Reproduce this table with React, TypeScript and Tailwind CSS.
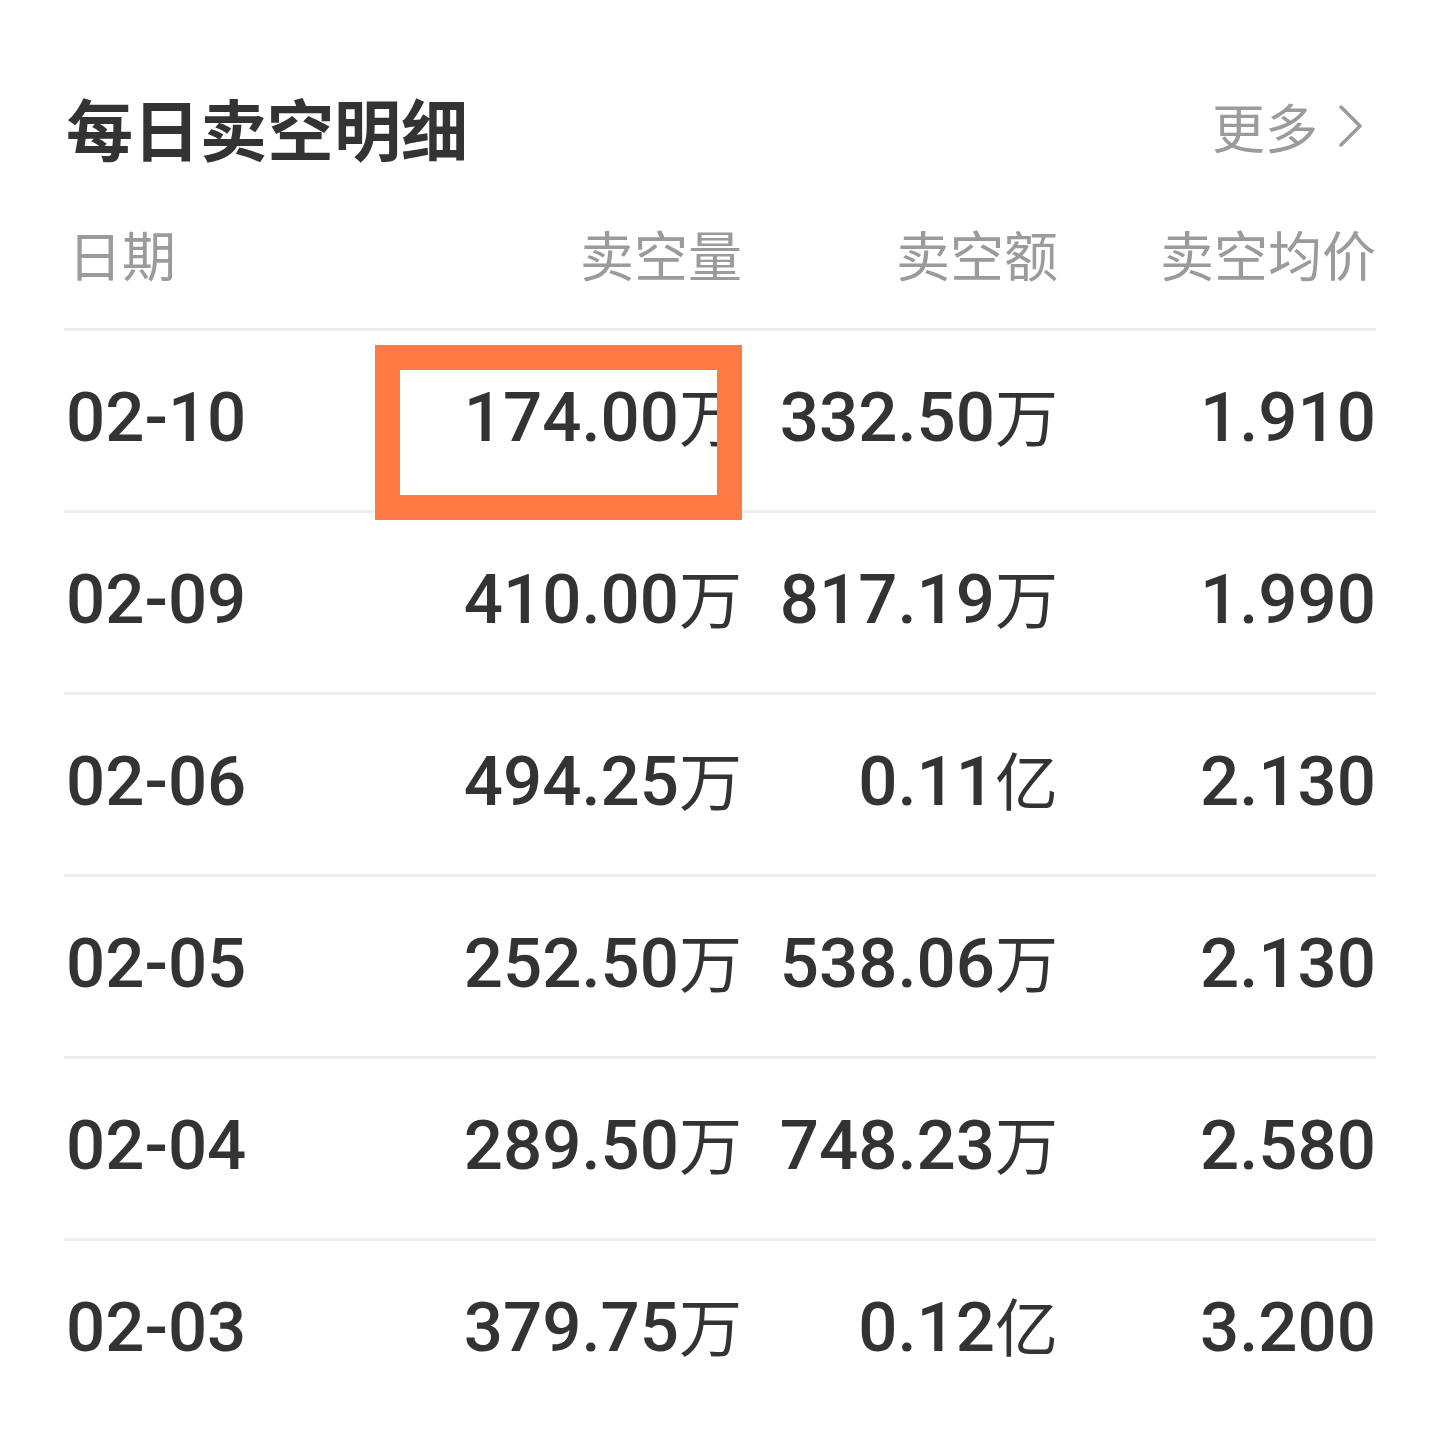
const rows = [
  { date: '02-10', vol: '174.00', volUnit: '万', amt: '332.50', amtUnit: '万', avg: '1.910', marked: true },
  { date: '02-09', vol: '410.00', volUnit: '万', amt: '817.19', amtUnit: '万', avg: '1.990' },
  { date: '02-06', vol: '494.25', volUnit: '万', amt: '0.11', amtUnit: '亿', avg: '2.130' },
  { date: '02-05', vol: '252.50', volUnit: '万', amt: '538.06', amtUnit: '万', avg: '2.130' },
  { date: '02-04', vol: '289.50', volUnit: '万', amt: '748.23', amtUnit: '万', avg: '2.580' },
  { date: '02-03', vol: '379.75', volUnit: '万', amt: '0.12', amtUnit: '亿', avg: '3.200' },
]

const cjk = "font-['Noto_Sans_CJK_SC',sans-serif]"
const num = "font-['Roboto','Noto_Sans_CJK_SC',sans-serif]"

function Value({ n, unit }: { n: string; unit?: string }) {
  return (
    <span className={`${num} font-medium`}>
      {n}
      {unit && <span className={`${cjk} font-normal text-[63px]`}>{unit}</span>}
    </span>
  )
}

export default function App() {
  return (
    <div className="h-[1438px] w-full overflow-hidden bg-white px-16 text-[#333333]">
      {/* Title */}
      <div className="mt-[76px] flex h-[100px] items-center justify-between">
        <h1 className={`${cjk} text-[67px] font-bold leading-none pl-[2px]`}>每日卖空明细</h1>
        <div className={`${cjk} flex items-center gap-[20px] text-[53px] leading-none text-[#9b9b9b]`}>
          <span>更多</span>
          <svg width="26" height="42" viewBox="0 0 26 42" fill="none" className="mr-[12px]">
            <path d="M3 2 L22 21 L3 40" stroke="#9b9b9b" strokeWidth="3.5" strokeLinecap="round" strokeLinejoin="round" />
          </svg>
        </div>
      </div>

      {/* Header */}
      <div className={`${cjk} grid h-[152px] grid-cols-[300px_378px_316px_318px] items-center pt-[4px] text-[54px] leading-none text-[#9b9b9b]`}>
        <div className="pl-[4px]">日期</div>
        <div className="text-right">卖空量</div>
        <div className="text-right">卖空额</div>
        <div className="text-right">卖空均价</div>
      </div>

      {/* Rows */}
      <div>
        {rows.map((r) => (
          <div
            key={r.date}
            className="relative grid h-[182px] grid-cols-[300px_378px_316px_318px] items-center border-t-[3px] border-[#eeeeee] pb-[10px] text-[69px] leading-none"
          >
            <div className="pl-[2px]">
              <Value n={r.date} />
            </div>
            <div className="text-right">
              <Value n={r.vol} unit={r.volUnit} />
            </div>
            <div className="text-right">
              <Value n={r.amt} unit={r.amtUnit} />
            </div>
            <div className="text-right">
              <Value n={r.avg} />
            </div>
            {r.marked && (
              <div className="pointer-events-none absolute left-[311px] top-[14px] z-10 h-[175px] w-[367px] border-[25px] border-[#ff7a45]" />
            )}
          </div>
        ))}
      </div>
    </div>
  )
}
